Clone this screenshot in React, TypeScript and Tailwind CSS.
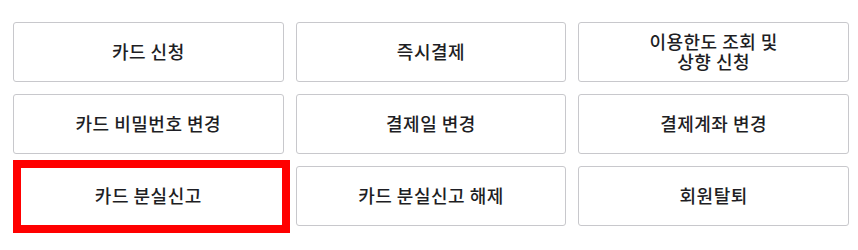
import React from "react";

const items: React.ReactNode[] = [
  "카드 신청",
  "즉시결제",
  <>
    이용한도 조회 및
    <br />
    상향 신청
  </>,
  "카드 비밀번호 변경",
  "결제일 변경",
  "결제계좌 변경",
  "카드 분실신고",
  "카드 분실신고 해제",
  "회원탈퇴",
];

export default function App() {
  return (
    <div
      className="w-[858px] h-[250px] bg-white pt-[22px] pl-[13px]"
      style={{ fontFamily: '"Noto Sans CJK KR", "Noto Sans", sans-serif' }}
    >
      <div className="w-[836px] grid grid-cols-3 gap-[12px]">
        {items.map((label, i) => (
          <div
            key={i}
            className="relative h-[60px] border border-[#c8c8cc] rounded-[3px] flex items-center justify-center text-center text-[18px] leading-[20px] tracking-[0.5px] font-medium text-[#1e1e24]"
          >
            <span className="-mt-[2px]">{label}</span>
            {i === 6 && (
              <div className="absolute left-[-1px] top-[-7px] w-[277px] h-[73px] border-[8px] border-[#ff0000]" />
            )}
          </div>
        ))}
      </div>
    </div>
  );
}
